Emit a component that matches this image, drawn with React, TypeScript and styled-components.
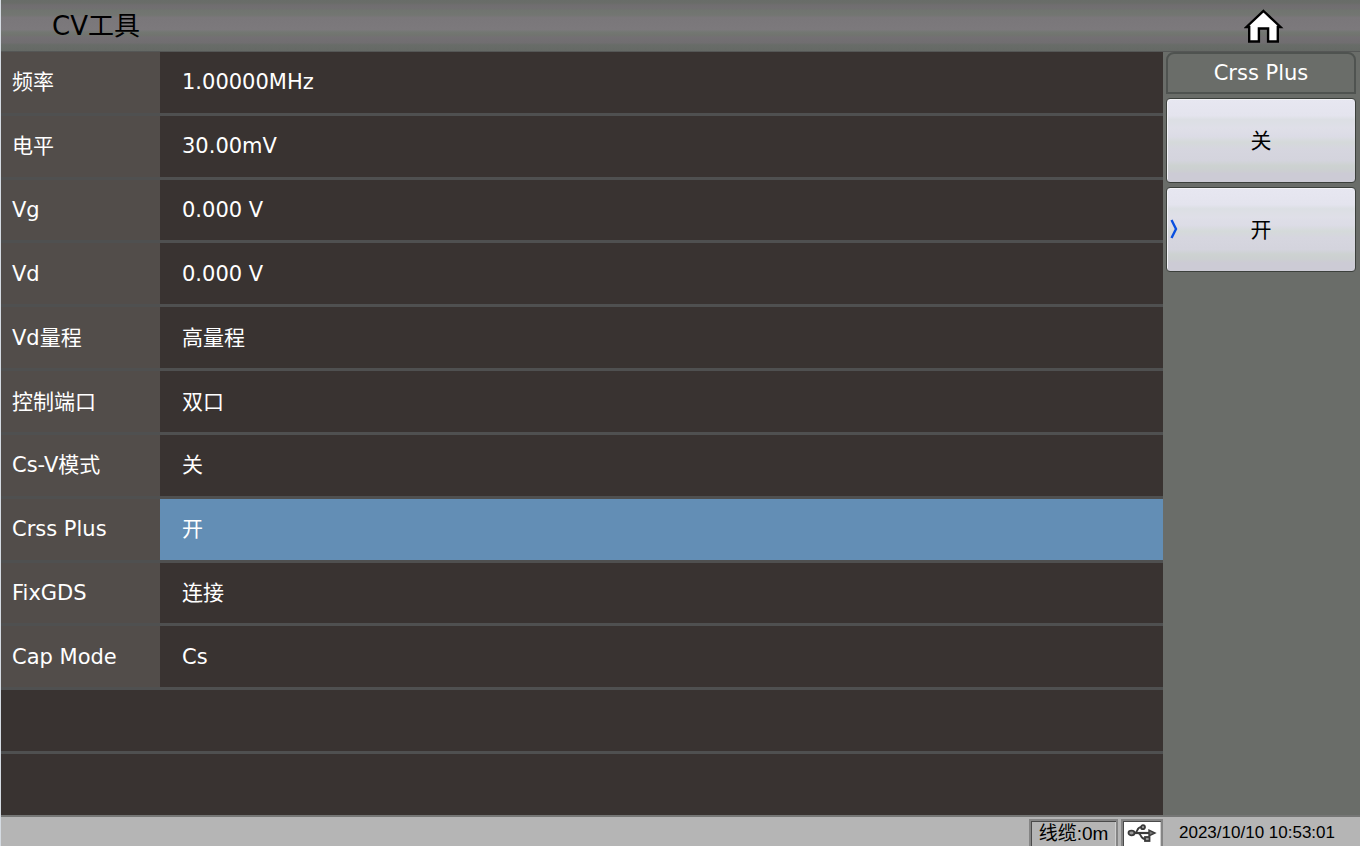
import React, { useState } from "react";
import styled, { createGlobalStyle } from "styled-components";

const GlobalStyle = createGlobalStyle`
  *, *::before, *::after { box-sizing: border-box; }
  body {
    margin: 0;
    background: #6a6d69;
    font-family: "DejaVu Sans", "Noto Sans CJK SC", sans-serif;
  }
`;

const Screen = styled.div`
  display: flex;
  flex-direction: column;
  min-height: 100vh;
  border-left: 1px solid #d5dbe2;
`;

const TitleBar = styled.header`
  display: flex;
  align-items: center;
  justify-content: space-between;
  height: 52px;
  padding: 0 76px 0 51px;
  background: linear-gradient(
    #686c68 0%,
    #6a6d69 6%,
    #706e70 10%,
    #716f71 16%,
    #70746f 20%,
    #737672 30%,
    #7a777a 34%,
    #7c797c 58%,
    #737772 63%,
    #71746f 69%,
    #737073 73%,
    #706e70 84%,
    #686c68 88%,
    #656965 100%
  );
  border-bottom: 1px solid #555756;
`;

const Title = styled.h1`
  margin: 0;
  font-size: 26px;
  line-height: 32px;
  font-weight: 400;
  color: #000;
`;

const HomeButton = styled.button`
  display: flex;
  padding: 0;
  border: 0;
  background: none;
  cursor: pointer;
`;

const Main = styled.main`
  flex: 1;
  display: flex;
`;

const Settings = styled.dl`
  flex: 1;
  display: grid;
  grid-auto-rows: 1fr;
  gap: 3px;
  margin: 0;
  background: #4f5050;
`;

const Row = styled.div`
  display: flex;
  min-height: 40px;
  background: #393331;
`;

const Label = styled.dt`
  flex: 0 0 159px;
  display: flex;
  align-items: center;
  padding-left: 11px;
  background: #524d4a;
  color: #fff;
  font-size: 21px;
  line-height: 28px;
`;

const Value = styled.dd<{ $selected: boolean }>`
  flex: 1;
  display: flex;
  align-items: center;
  margin: 0;
  padding-left: 22px;
  background: ${(p) => (p.$selected ? "#638eb5" : "#393331")};
  color: #fff;
  font-size: 21px;
  line-height: 28px;
`;

const SoftKeys = styled.aside`
  flex: 0 0 197px;
  display: flex;
  flex-direction: column;
  gap: 4px;
  padding: 0 4px 0 3px;
  background: #6a6d69;
`;

const MenuTitle = styled.h2`
  margin: 0;
  height: 42px;
  border: 2px solid #4f5350;
  border-radius: 8px 8px 0 0;
  text-align: center;
  font-size: 21px;
  line-height: 38px;
  font-weight: 400;
  color: #fff;
`;

const SoftKey = styled.button`
  position: relative;
  height: 85px;
  padding: 0;
  border: 1px solid #3c403c;
  border-radius: 4px;
  background: linear-gradient(#e7e7f1 0%, #e4e4ee 20%, #dcdfe4 25%, #dfdfe8 35%, #dcdce6 45%, #d5dada 52%, #d6d6df 60%, #d4d4dd 74%, #cdd2d1 80%, #cccfd1 86%, #cccbd5 90%, #cccbd5 100%);
  box-shadow: inset 1px 1px 0 #f4f4f8;
  color: #000;
  font-family: inherit;
  font-size: 21px;
  line-height: 28px;
  cursor: pointer;
`;

const Marker = styled.svg`
  position: absolute;
  left: 3px;
  top: 31px;
`;

const StatusBar = styled.footer`
  display: flex;
  align-items: stretch;
  height: 31px;
  padding-top: 2px;
  border-top: 2px solid #757675;
  background: #b5b5b5;
  color: #000;
  font-family: "Liberation Sans", "Noto Sans CJK SC", sans-serif;
  line-height: 28px;
`;

const Boxes = styled.div`
  display: flex;
  gap: 3px;
  margin-left: auto;
`;

const StatusBox = styled.div<{ $light?: boolean }>`
  display: flex;
  align-items: center;
  justify-content: center;
  width: ${(p) => (p.$light ? "42px" : "89px")};
  border: 2px solid #858585;
  border-bottom: 0;
  box-shadow: inset 1px 1px 0 #4a4a4a, inset -1px 0 0 #cecece;
  background: ${(p) => (p.$light ? "#fff" : "#b5b5b5")};
  font-size: 19px;
  white-space: nowrap;
`;

const Clock = styled.time`
  width: 197px;
  padding-left: 16px;
  font-size: 17px;
  white-space: nowrap;
`;

const settings = [
  ["频率", "1.00000MHz"],
  ["电平", "30.00mV"],
  ["Vg", "0.000 V"],
  ["Vd", "0.000 V"],
  ["Vd量程", "高量程"],
  ["控制端口", "双口"],
  ["Cs-V模式", "关"],
  ["Crss Plus", "开"],
  ["FixGDS", "连接"],
  ["Cap Mode", "Cs"],
];

const options = ["关", "开"];

export default function App() {
  const [choice, setChoice] = useState("开");
  return (
    <>
      <GlobalStyle />
      <Screen>
        <TitleBar>
          <Title>CV工具</Title>
          <HomeButton aria-label="Home">
            <svg width="40" height="36" viewBox="0 0 40 36">
              <path
                d="M19.500 3 L36.500 19 H33.800 V33.500 H24.100 V20.500 H14.900 V33.500 H5.200 V19 H2.500 Z"
                fill="#fff"
                stroke="#000"
                strokeWidth="2.4"
              />
            </svg>
          </HomeButton>
        </TitleBar>
        <Main>
          <Settings>
            {settings.map(([name, value]) => (
              <Row key={name}>
                <Label>{name}</Label>
                <Value $selected={name === "Crss Plus"}>{name === "Crss Plus" ? choice : value}</Value>
              </Row>
            ))}
            <Row />
            <Row />
          </Settings>
          <SoftKeys>
            <MenuTitle>Crss Plus</MenuTitle>
            {options.map((option) => (
              <SoftKey key={option} aria-pressed={choice === option} onClick={() => setChoice(option)}>
                {choice === option && (
                  <Marker width="8" height="20" viewBox="0 0 8 20">
                    <path d="M1.500 1 L6 10 L1.500 19" fill="none" stroke="#0a50e0" strokeWidth="2.4" />
                  </Marker>
                )}
                {option}
              </SoftKey>
            ))}
          </SoftKeys>
        </Main>
        <StatusBar>
          <Boxes>
            <StatusBox>线缆:0m</StatusBox>
            <StatusBox $light>
              <svg
                width="30"
                height="20"
                viewBox="0 0 30 20"
                fill="none"
                stroke="#3a3a3a"
                strokeWidth="1.8"
                role="img"
                aria-label="USB"
              >
                <ellipse cx="4.500" cy="9" rx="3" ry="2.300" fill="#999" />
                <path d="M7.500 9 H23" strokeWidth="2.2" />
                <path d="M22 6.200 L28 9 L22 11.800 Z" fill="#777" strokeWidth="1.4" />
                <path d="M8 9 C11 8.500 9.500 3.200 14 3.200" />
                <circle cx="16" cy="3.200" r="2" fill="#999" />
                <path d="M11 9 C14.500 9 13 15 18 15" />
                <rect x="18" y="13" width="4.500" height="4" fill="#999" />
              </svg>
            </StatusBox>
          </Boxes>
          <Clock dateTime="2023-10-10T10:53:01">2023/10/10 10:53:01</Clock>
        </StatusBar>
      </Screen>
    </>
  );
}
